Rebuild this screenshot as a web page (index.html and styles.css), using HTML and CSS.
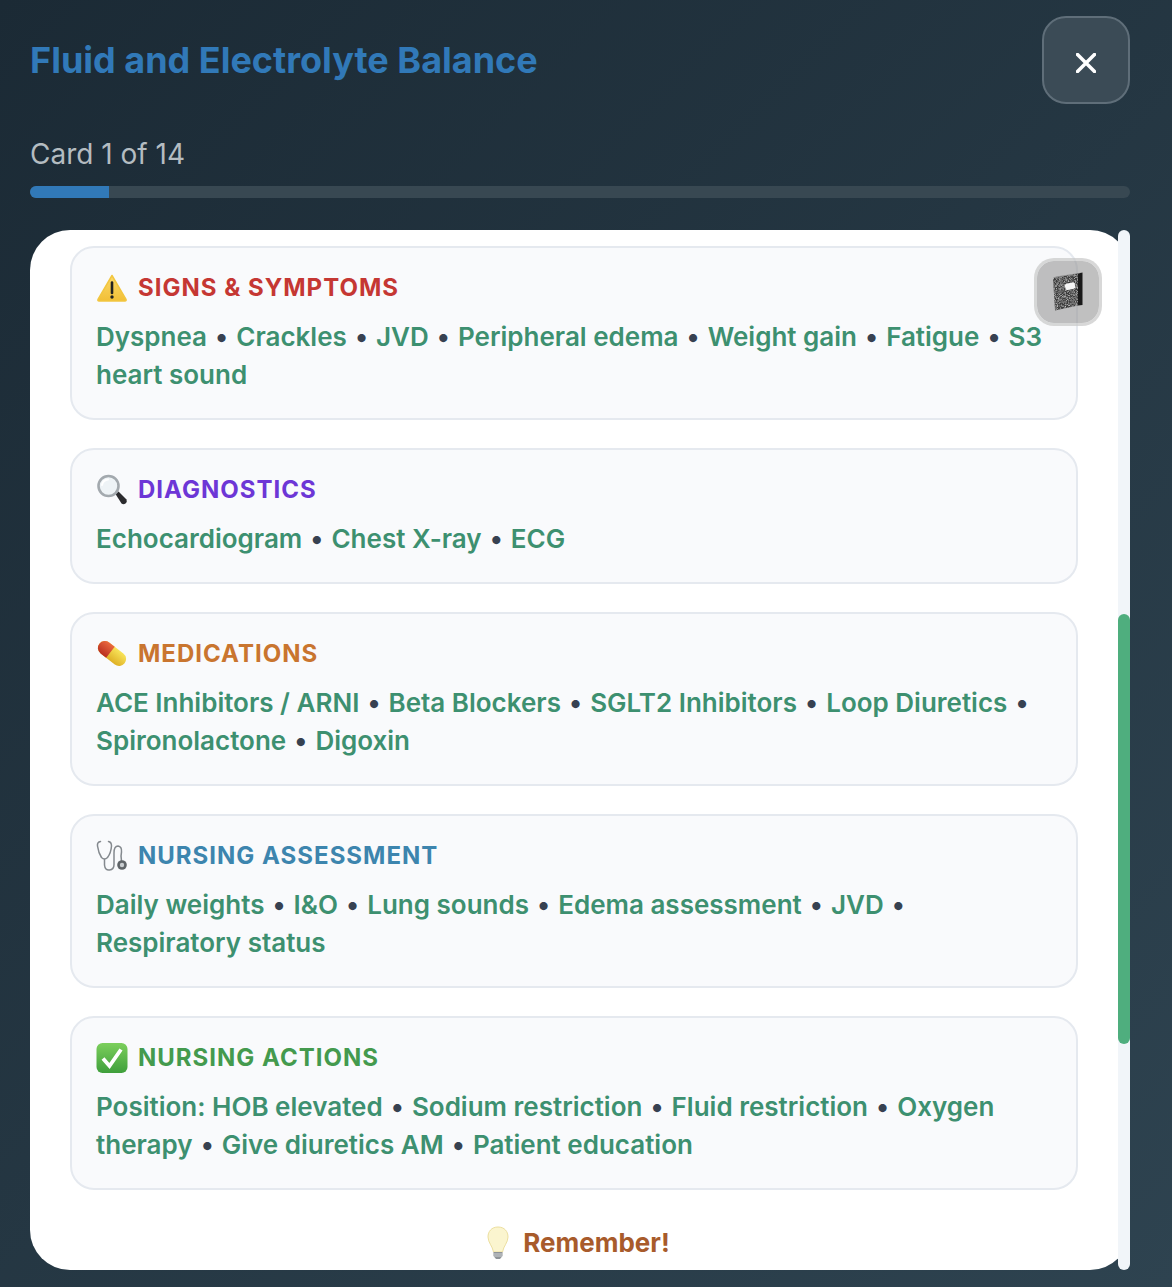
FILE: index.html
```html
<!DOCTYPE html>
<html lang="en">
<head>
    <meta charset="UTF-8">
    <meta name="viewport" content="width=device-width, initial-scale=1.0">
    <title>Fluid and Electrolyte Balance</title>
    <link rel="stylesheet" href="styles.css">
</head>
<body>
    <header class="top">
        <h1>Fluid and Electrolyte Balance</h1>
        <button class="close" aria-label="Close">
            <svg viewBox="0 0 20 20" width="20" height="20"><path d="M1.500 1.500 18.500 18.500M18.500 1.500 1.500 18.500" stroke="#fff" stroke-width="3.500" stroke-linecap="round"/></svg>
        </button>
    </header>

    <div class="count">Card 1 of 14</div>
    <div class="progress"><div class="progress-fill" style="width: 7.14%"></div></div>

    <div class="panel-wrap">
        <main class="panel">
            <!-- Signs -->
            <section class="block">
                <h2 class="head red">
                    <svg class="ico" viewBox="0 0 32 32"><defs><linearGradient id="warn" x1="0" y1="0" x2="0" y2="1"><stop offset="0" stop-color="#fbd96a"/><stop offset="1" stop-color="#f2bf36"/></linearGradient></defs><path d="M16 3.500 30 27.500Q30.500 29 29 29H3Q1.500 29 2 27.500Z" fill="url(#warn)" stroke="#f2c640" stroke-width="1.500" stroke-linejoin="round"/><path d="M16 10.500V21" stroke="#222" stroke-width="2.600" stroke-linecap="round"/><circle cx="16" cy="25" r="1.700" fill="#222"/></svg>
                    SIGNS &amp; SYMPTOMS
                </h2>
                <p class="items">Dyspnea <b>•</b> Crackles <b>•</b> JVD <b>•</b> Peripheral edema <b>•</b> Weight gain <b>•</b> Fatigue <b>•</b> S3 heart sound</p>
            </section>

            <!-- Diagnostics -->
            <section class="block">
                <h2 class="head purple">
                    <svg class="ico" viewBox="0 0 32 32"><path d="M19.500 20 22.500 17.500 30.500 25.500Q31.500 28 29.500 29.500 27.500 31 25.500 29.500Z" fill="#2b2b2e"/><circle cx="12.500" cy="12" r="10" fill="#eef3f6" stroke="#a3a9ae" stroke-width="2.600"/><path d="M6 11Q7 6 12 5.500" fill="none" stroke="#fff" stroke-width="2" stroke-linecap="round"/></svg>
                    DIAGNOSTICS
                </h2>
                <p class="items">Echocardiogram <b>•</b> Chest X-ray <b>•</b> ECG</p>
            </section>

            <!-- Medications -->
            <section class="block">
                <h2 class="head orange">
                    <svg class="ico" viewBox="0 0 32 32"><defs><linearGradient id="pillY" x1="0" y1="0" x2="0" y2="1"><stop offset="0" stop-color="#f8e45a"/><stop offset="1" stop-color="#dfb025"/></linearGradient><linearGradient id="pillR" x1="0" y1="0" x2="0" y2="1"><stop offset="0" stop-color="#ea6a3f"/><stop offset="1" stop-color="#b92f1f"/></linearGradient></defs><g transform="rotate(38 16 15.500)"><rect x="0" y="8.500" width="32" height="14" rx="7" fill="url(#pillY)"/><path d="M14 8.500H7a7 7 0 0 0 0 14h7Z" fill="url(#pillR)"/></g></svg>
                    MEDICATIONS
                </h2>
                <p class="items">ACE Inhibitors / ARNI <b>•</b> Beta Blockers <b>•</b> SGLT2 Inhibitors <b>•</b> Loop Diuretics <b>•</b> Spironolactone <b>•</b> Digoxin</p>
            </section>

            <!-- Assessment -->
            <section class="block">
                <h2 class="head teal">
                    <svg class="ico" viewBox="0 0 32 32"><g fill="none" stroke="#84898e" stroke-width="1.500" stroke-linecap="round"><path d="M4.500 1.500Q1 2 1.500 6 2.500 13 5.500 17.500 8.500 20.500 11.500 17.500 15 13 15.500 6 15.500 2 12.500 1.500"/><path d="M8.500 19.500V25Q9 30.500 13.500 30 18 29.500 18 24.500V13Q18 6 22 6 26 6.500 25.500 12 24.500 16 25.500 21"/></g><circle cx="26" cy="25" r="4.800" fill="#5f6468"/><circle cx="26" cy="25" r="2.200" fill="#c9cdd0"/></svg>
                    NURSING ASSESSMENT
                </h2>
                <p class="items">Daily weights <b>•</b> I&amp;O <b>•</b> Lung sounds <b>•</b> Edema assessment <b>•</b> JVD <b>•</b> Respiratory status</p>
            </section>

            <!-- Actions -->
            <section class="block">
                <h2 class="head green">
                    <svg class="ico" viewBox="0 0 32 32"><defs><linearGradient id="chk" x1="0" y1="0" x2="0" y2="1"><stop offset="0" stop-color="#7ccf5c"/><stop offset="1" stop-color="#3f9f3c"/></linearGradient></defs><rect x=".5" y="1" width="31" height="30" rx="6" fill="url(#chk)"/><path d="M7 16.500 13.500 24 25 7.500" fill="none" stroke="#fff" stroke-width="3.800"/></svg>
                    NURSING ACTIONS
                </h2>
                <p class="items">Position: HOB elevated <b>•</b> Sodium restriction <b>•</b> Fluid restriction <b>•</b> Oxygen therapy <b>•</b> Give diuretics AM <b>•</b> Patient education</p>
            </section>

            <h3 class="remember">
                <svg class="bulb" viewBox="0 0 24 34"><path d="M12 1C5.500 1 2 5.500 2 11c0 5.500 4.500 9 5.500 15h9C17.500 20 22 16.500 22 11 22 5.500 18.500 1 12 1Z" fill="#fbf5cf" stroke="#ecdf9f" stroke-width="1"/><path d="M7.500 26h9v4l-2.500 3h-4l-2.500-3Z" fill="#8f9498"/><path d="M8 28h8M8 30h8" stroke="#dfe2e4" stroke-width=".8"/></svg>
                Remember!
            </h3>
        </main>

        <button class="note" aria-label="Notes">
            <svg viewBox="0 0 32 40" width="32" height="40">
                <defs>
                    <filter id="marble" x="0" y="0" width="100%" height="100%">
                        <feTurbulence type="fractalNoise" baseFrequency="1.100" numOctaves="2" seed="4"/>
                        <feColorMatrix values="0 0 0 0 1  0 0 0 0 1  0 0 0 0 1  1.500 0 0 0 -0.550"/>
                    </filter>
                    <clipPath id="cover"><path d="M1 6 26 1.500V33.500L3 38.500Z"/></clipPath>
                </defs>
                <path d="M26 1.500 30.500 .500V33L26 33.500Z" fill="#1a1a1a"/>
                <path d="M1 6 26 1.500 30.500 .500 4 4.500Z" fill="#8a8a8a"/>
                <path d="M1 6 26 1.500V33.500L3 38.500Z" fill="#3c3c3c"/>
                <g clip-path="url(#cover)"><rect width="32" height="40" filter="url(#marble)"/></g>
                <rect x="13" y="11" width="10" height="6.500" rx="2" transform="rotate(-12 18 14)" fill="#f5f5f5"/>
            </svg>
        </button>

        <div class="track"><div class="thumb"></div></div>
    </div>
</body>
</html>
```

FILE: styles.css
```css
/* General Styling */
* {
    box-sizing: border-box;
}

body {
    margin: 0;
    padding: 16px 42px 17px 30px;
    height: 1287px;
    overflow: hidden;
    font-family: Inter, 'Liberation Sans', sans-serif;
    background: linear-gradient(135deg, #1b2a35 0%, #2e4350 100%);
}

/* Header */
.top {
    display: flex;
    justify-content: space-between;
    align-items: flex-start;
    width: 1100px;
    height: 88px;
}

h1 {
    margin: 22px 0 0;
    font-size: 36px;
    line-height: 44px;
    font-weight: 700;
    color: #3179b8;
}

.close {
    width: 88px;
    height: 88px;
    padding: 6px 0 0;
    border-radius: 24px;
    border: 2px solid #5f6e79;
    background: #3b4b56;
    display: flex;
    align-items: center;
    justify-content: center;
}

.count {
    margin-top: 32px;
    font-size: 28px;
    line-height: 36px;
    color: #b4bcc1;
}

/* Progress */
.progress {
    width: 1100px;
    height: 12px;
    margin-top: 14px;
    border-radius: 6px;
    background: #384852;
    overflow: hidden;
}

.progress-fill {
    height: 100%;
    background: #3179b8;
}

/* Main panel */
.panel-wrap {
    position: relative;
    width: 1100px;
    height: 1040px;
    margin-top: 32px;
}

.panel {
    height: 100%;
    padding: 16px 52px 0 40px;
    border-radius: 40px;
    background: #fff;
    overflow: hidden;
}

.block {
    margin-bottom: 28px;
    padding: 24px 24px 24px;
    border: 2px solid #e5e9ef;
    border-radius: 24px;
    background: #f9fafc;
}

.head {
    display: flex;
    align-items: center;
    gap: 10px;
    margin: 0 0 14px;
    font-size: 24px;
    line-height: 32px;
    font-weight: 700;
    letter-spacing: 1px;
}

.ico {
    width: 32px;
    height: 32px;
    flex: none;
}

.red { color: #c53733; }
.purple { color: #6d36d6; }
.orange { color: #c9752f; }
.teal { color: #3d85ae; }
.green { color: #449a4e; }

.items {
    margin: 0;
    font-size: 26px;
    line-height: 38px;
    font-weight: 600;
    color: #3d9070;
}

.items b {
    margin: 0 1.5px;
    font-weight: 600;
    color: #374151;
}

.remember {
    display: flex;
    align-items: center;
    justify-content: center;
    gap: 13px;
    margin: 35px 0 0 8px;
    font-size: 26px;
    line-height: 36px;
    font-weight: 700;
    color: #a85b2b;
}

.bulb {
    width: 24px;
    height: 34px;
}

/* Floating notebook button */
.note {
    position: absolute;
    top: 28px;
    right: 28px;
    width: 68px;
    height: 68px;
    padding: 0;
    border: 3px solid rgba(200, 200, 200, 0.7);
    border-radius: 20px;
    background: rgba(150, 150, 150, 0.6);
    background-clip: padding-box;
    display: flex;
    align-items: center;
    justify-content: center;
}

/* Scrollbar */
.track {
    position: absolute;
    top: 0;
    right: 0;
    width: 12px;
    height: 100%;
    border-radius: 6px;
    background: #f1f5f9;
}

.thumb {
    width: 100%;
    height: 430px;
    margin-top: 384px;
    border-radius: 6px;
    background: #4fae7e;
}
```
